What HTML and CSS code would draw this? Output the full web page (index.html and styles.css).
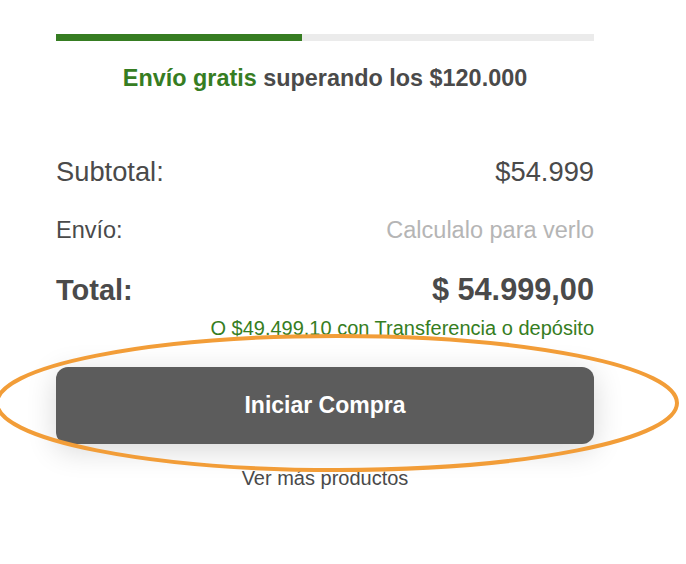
FILE: index.html
```html
<!DOCTYPE html>
<html lang="es">
<head>
  <meta charset="UTF-8">
  <title>Carrito</title>
  <meta name="viewport" content="width=device-width, initial-scale=1.0">
  <link rel="stylesheet" href="styles.css">
</head>
<body>
  <div class="cart-summary">
    <div class="shipping-bar">
      <div class="shipping-fill" style="width: 45.8%"></div>
    </div>
    <p class="shipping-note"><span class="green">Envío gratis</span> superando los $120.000</p>

    <div class="row subtotal">
      <span>Subtotal:</span>
      <span>$54.999</span>
    </div>
    <div class="row shipping">
      <span>Envío:</span>
      <span class="muted">Calculalo para verlo</span>
    </div>
    <div class="row total">
      <span>Total:</span>
      <span class="total-value">$ 54.999,00</span>
    </div>
    <p class="transfer">O $49.499,10 con Transferencia o depósito</p>

    <button class="checkout-btn">Iniciar Compra</button>
    <a href="#" class="more-link">Ver más productos</a>
  </div>

  <!-- annotation ring drawn over the page -->
  <svg class="highlight" width="686" height="564" viewBox="0 0 686 564">
    <ellipse cx="337" cy="403" rx="340" ry="67" fill="none" stroke="#f29d38" stroke-width="4"/>
  </svg>
</body>
</html>
```

FILE: styles.css
```css
* {
  margin: 0;
  padding: 0;
  box-sizing: border-box;
}

body {
  background: #ffffff;
  font-family: "Liberation Sans", Arial, sans-serif;
  color: #4a4a4a;
  position: relative;
  min-height: 564px;
  overflow: hidden;
}

.cart-summary {
  width: 538px;
  margin-left: 56px;
  padding-top: 34px;
  display: flex;
  flex-direction: column;
}

/* Progress bar */
.shipping-bar {
  height: 7px;
  background: #ebebeb;
}

.shipping-fill {
  height: 100%;
  background: #367d22;
}

.shipping-note {
  margin-top: 23px;
  font-size: 23.4px;
  line-height: 28px;
  font-weight: bold;
  text-align: center;
  color: #4a4a4a;
}

.green {
  color: #367d22;
}

/* Totals */
.row {
  display: flex;
  justify-content: space-between;
  align-items: baseline;
}

.subtotal {
  margin-top: 64px;
  font-size: 27.3px;
  line-height: 32px;
}

.shipping {
  margin-top: 28px;
  font-size: 23.5px;
  line-height: 28px;
}

.muted {
  color: #b5b5b5;
}

.total {
  margin-top: 29px;
  font-size: 29px;
  line-height: 34px;
  font-weight: bold;
}

.total-value {
  font-size: 30.7px;
}

.transfer {
  margin-top: 9px;
  font-size: 20px;
  line-height: 24px;
  text-align: right;
  color: #367d22;
}

/* Button */
.checkout-btn {
  margin-top: 27px;
  height: 77px;
  border: none;
  border-radius: 12px;
  background: #5c5c5c;
  color: #ffffff;
  font-family: inherit;
  font-size: 23px;
  font-weight: bold;
  box-shadow: 0 6px 30px rgba(0, 0, 0, 0.16);
  cursor: pointer;
}

.more-link {
  margin-top: 22px;
  font-size: 20px;
  line-height: 24px;
  text-align: center;
  color: #4a4a4a;
  text-decoration: none;
  align-self: center;
}

.highlight {
  position: absolute;
  top: 0;
  left: 0;
  pointer-events: none;
}
```
